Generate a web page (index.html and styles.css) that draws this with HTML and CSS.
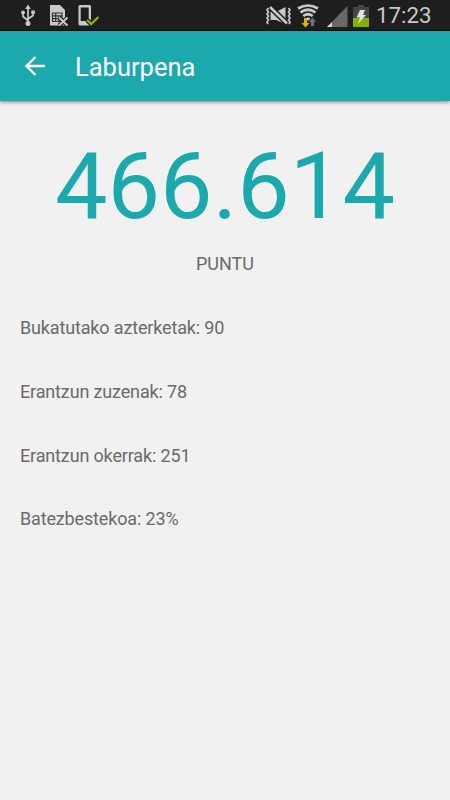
FILE: index.html
```html
<!DOCTYPE html>
<html lang="eu">
<head>
  <meta charset="UTF-8">
  <title>Laburpena</title>
  <link rel="stylesheet" href="styles.css">
</head>
<body>

  <div class="status-bar">
    <svg class="usb" width="14" height="24" viewBox="0 0 14 24">
      <path d="M7 4v16M2 9v4.500L7 17.500M12 8v4.500L7 16" fill="none" stroke="#c9c9c9" stroke-width="1.700"/>
      <path d="M7 1.500l2.800 4.500H4.200z" fill="#c9c9c9"/>
      <circle cx="7" cy="20.500" r="2.500" fill="#c9c9c9"/>
      <circle cx="2" cy="9.500" r="1.900" fill="#c9c9c9"/>
      <path d="M10.300 7.500h3.500V11h-3.500z" fill="#c9c9c9"/>
    </svg>
    <svg class="sim" width="20" height="24" viewBox="0 0 20 24">
      <path d="M0 2h10l5 5v15.500H0z" fill="#c9c9c9"/>
      <path d="M2.500 10h9.500v8.500H2.500zM2.500 12.800h9.500M2.500 15.600h9.500M5.700 10v8.500M8.800 12.800v6" fill="none" stroke="#333" stroke-width="1.200"/>
      <path d="M9 14.500l8.500 8M17.500 14.500L9 22.500" stroke="#1e1e1e" stroke-width="4"/>
      <path d="M9 14.500l8.500 8M17.500 14.500L9 22.500" stroke="#c9c9c9" stroke-width="2"/>
    </svg>
    <svg class="phone" width="22" height="24" viewBox="0 0 22 24">
      <path d="M2 2h9.500q1.500 0 1.500 1.500v17.500q0 1.500-1.500 1.500H2q-1.500 0-1.500-1.500v-17.500Q.5 2 2 2zM2.700 4.500v13.500h8V4.500z" fill="#c9c9c9" fill-rule="evenodd"/>
      <path d="M9 17l4.200 4L20.500 14" fill="none" stroke="#1e1e1e" stroke-width="4.500"/>
      <path d="M9 17l4.200 4L20.500 14" fill="none" stroke="#8dbd0b" stroke-width="2.100"/>
    </svg>
    <svg class="mute" width="28" height="20" viewBox="0 0 28 20">
      <path d="M5.500 6h5.500L20.500 1v17L11 14H5.500z" fill="#c9c9c9"/>
      <path d="M5 1l17 16.500" stroke="#1e1e1e" stroke-width="5.500"/>
      <path d="M5 1l17 16.500" stroke="#c9c9c9" stroke-width="2.500"/>
      <path d="M3.500 2L2 4l1.500 2L2 8l1.500 2L2 12l1.500 2L2 16l1 2M23.500 2L25 4l-1.500 2L25 8l-1.500 2 1.500 2-1.500 2 1.500 2-1 2" fill="none" stroke="#c9c9c9" stroke-width="1.700"/>
    </svg>
    <svg class="wifi" width="22" height="24" viewBox="0 0 22 24">
      <path d="M1 4.500q10-6 20 0M3.500 8.500q7.500-5.500 15 0M6.300 12q4.700-3.500 9.400 0" fill="none" stroke="#c9c9c9" stroke-width="2.700"/>
      <path d="M8.500 14.500q2.500-2 5 0L11 17z" fill="#c9c9c9"/>
      <path d="M7 14h3v5h2.500L8.500 23.500 4.500 19H7z" fill="#e3b006"/>
      <path d="M14 22v-4h-2l3.500-4.500L19 18h-2v4z" fill="#727272"/>
    </svg>
    <svg class="signal" width="21" height="22" viewBox="0 0 21 22">
      <path d="M20.500 0v21H0z" fill="#686868"/>
      <path d="M5 16v5H0z" fill="#d5d5d5"/>
    </svg>
    <svg class="battery" width="16" height="23" viewBox="0 0 16 23">
      <path d="M5 0h6v2h5v12H0V2h5z" fill="#464646"/>
      <path d="M0 13h16v9H0z" fill="#80b000"/>
      <path d="M7 5h5l-2 5h3L5 19l2-6.500H3.500z" fill="#e2e2e2"/>
    </svg>
    <span class="clock">17:23</span>
  </div>

  <div class="toolbar">
    <svg class="back" width="20" height="20" viewBox="0 0 20 20">
      <path d="M20 10H2M10.500 1L1.500 10l9 9" fill="none" stroke="#fff" stroke-width="2.300"/>
    </svg>
    <h1>Laburpena</h1>
  </div>

  <div class="summary">
    <div class="score">466.614</div>
    <div class="unit">PUNTU</div>
    <ul class="stats">
      <li>Bukatutako azterketak: 90</li>
      <li>Erantzun zuzenak: 78</li>
      <li>Erantzun okerrak: 251</li>
      <li>Batezbestekoa: 23%</li>
    </ul>
  </div>

</body>
</html>
```

FILE: styles.css
```css
body {
  margin: 0;
  min-height: 800px;
  background-color: #f1f1f1;
  font-family: Roboto, sans-serif;
  color: #6a6a6a;
}
.status-bar {
  display: flex;
  align-items: flex-start;
  box-sizing: border-box;
  height: 31px;
  padding: 3px 0 0 21px;
  background-color: #1e1e1e;
  border-bottom: 1px solid #1a0b0d;
}
.status-bar svg {
  flex: none;
}
.sim {
  margin-left: 15px;
}
.phone {
  margin-left: 8px;
}
.mute {
  margin: 3px 0 0 165px;
}
.wifi {
  margin: 1px 0 0 4px;
}
.signal {
  margin: 3px 0 0 8px;
}
.battery {
  margin: 2px 0 0 5px;
}
.clock {
  margin-left: 7px;
  font-size: 22.3px;
  line-height: 25px;
  color: #c9c9c9;
}
.toolbar {
  display: flex;
  align-items: center;
  height: 70px;
  padding-left: 25px;
  background-color: #1ba9ae;
  box-shadow: 0 1px 4px rgba(0, 0, 0, 0.5);
}
.toolbar h1 {
  margin: 2px 0 0 30px;
  font-size: 25.5px;
  font-weight: 400;
  line-height: 30px;
  color: #fff;
}
.score {
  padding-top: 30px;
  font-size: 93.5px;
  line-height: 110px;
  text-align: center;
  color: #1ba9ae;
}
.unit {
  margin-top: 12px;
  font-size: 18px;
  line-height: 22px;
  text-align: center;
}
.stats {
  margin: 42px 0 0;
  padding: 0 20px;
  list-style: none;
  font-size: 18px;
  line-height: 22px;
  letter-spacing: -0.15px;
}
.stats li {
  margin-bottom: 41.8px;
}
```
